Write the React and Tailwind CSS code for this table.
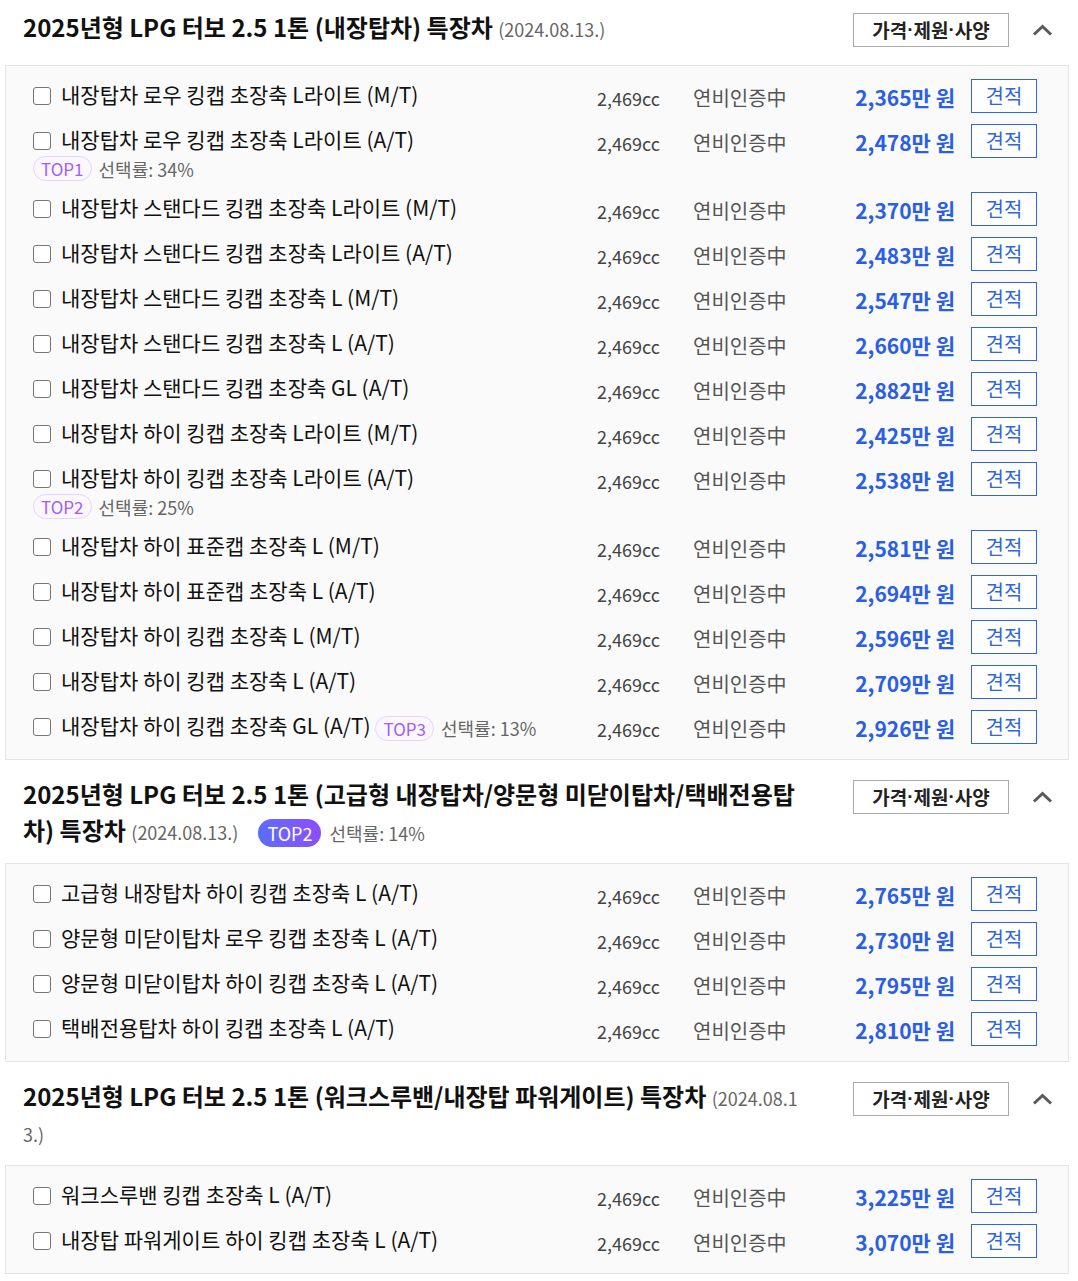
import React from 'react';

const font = { fontFamily: '"Noto Sans CJK KR", "Noto Sans", sans-serif' };

const sections = [
  {
    lines: ['2025년형 LPG 터보 2.5 1톤 (내장탑차) 특장차'],
    date: ['(2024.08.13.)'],
    first: true,
    trims: [
      { name: '내장탑차 로우 킹캡 초장축 L라이트 (M/T)', price: '2,365' },
      { name: '내장탑차 로우 킹캡 초장축 L라이트 (A/T)', price: '2,478', badge: { rank: 'TOP1', rate: '34%' } },
      { name: '내장탑차 스탠다드 킹캡 초장축 L라이트 (M/T)', price: '2,370' },
      { name: '내장탑차 스탠다드 킹캡 초장축 L라이트 (A/T)', price: '2,483' },
      { name: '내장탑차 스탠다드 킹캡 초장축 L (M/T)', price: '2,547' },
      { name: '내장탑차 스탠다드 킹캡 초장축 L (A/T)', price: '2,660' },
      { name: '내장탑차 스탠다드 킹캡 초장축 GL (A/T)', price: '2,882' },
      { name: '내장탑차 하이 킹캡 초장축 L라이트 (M/T)', price: '2,425' },
      { name: '내장탑차 하이 킹캡 초장축 L라이트 (A/T)', price: '2,538', badge: { rank: 'TOP2', rate: '25%' } },
      { name: '내장탑차 하이 표준캡 초장축 L (M/T)', price: '2,581' },
      { name: '내장탑차 하이 표준캡 초장축 L (A/T)', price: '2,694' },
      { name: '내장탑차 하이 킹캡 초장축 L (M/T)', price: '2,596' },
      { name: '내장탑차 하이 킹캡 초장축 L (A/T)', price: '2,709' },
      { name: '내장탑차 하이 킹캡 초장축 GL (A/T)', price: '2,926', badge: { rank: 'TOP3', rate: '13%', inline: true } },
    ],
  },
  {
    lines: ['2025년형 LPG 터보 2.5 1톤 (고급형 내장탑차/양문형 미닫이탑차/택배전용탑', '차) 특장차'],
    date: ['(2024.08.13.)'],
    top: { rank: 'TOP2', rate: '14%' },
    trims: [
      { name: '고급형 내장탑차 하이 킹캡 초장축 L (A/T)', price: '2,765' },
      { name: '양문형 미닫이탑차 로우 킹캡 초장축 L (A/T)', price: '2,730' },
      { name: '양문형 미닫이탑차 하이 킹캡 초장축 L (A/T)', price: '2,795' },
      { name: '택배전용탑차 하이 킹캡 초장축 L (A/T)', price: '2,810' },
    ],
  },
  {
    lines: ['2025년형 LPG 터보 2.5 1톤 (워크스루밴/내장탑 파워게이트) 특장차'],
    date: ['(2024.08.1', '3.)'],
    trims: [
      { name: '워크스루밴 킹캡 초장축 L (A/T)', price: '3,225' },
      { name: '내장탑 파워게이트 하이 킹캡 초장축 L (A/T)', price: '3,070' },
    ],
  },
];

function Chevron() {
  return (
    <svg width="21" height="12" viewBox="0 0 21 12" fill="none">
      <polyline points="2,10.5 10.5,2.5 19,10.5" stroke="#5a5a5a" strokeWidth="3" />
    </svg>
  );
}

function Rank({ badge }) {
  return (
    <span className="inline-flex items-center gap-[7px] whitespace-nowrap align-middle leading-none">
      <span className="inline-flex h-[25px] items-center rounded-full border border-[#e6d4ff] bg-[#fbf7ff] px-[7px] text-[17px] text-[#a45cf6]">
        {badge.rank}
      </span>
      <span className="text-[18px] text-[#666]">선택률: {badge.rate}</span>
    </span>
  );
}

function Checkbox() {
  return (
    <span className="mr-[10px] inline-block h-[18px] w-[18px] rounded-[3px] border-[1.5px] border-[#767676] bg-white align-[-2px]" />
  );
}

function TrimRow({ trim }) {
  const { badge } = trim;
  return (
    <div className="flex items-start">
      <div className="flex-1 pr-[24px] text-[21px] leading-[30px] text-[#111]">
        <div className="whitespace-nowrap">
          <Checkbox />
          {trim.name}
          {badge && badge.inline && (
            <>
              {' '}
              <Rank badge={badge} />
            </>
          )}
        </div>
        {badge && !badge.inline && (
          <div className="flex h-[27px] items-center pt-[2px]">
            <Rank badge={badge} />
          </div>
        )}
      </div>
      <div className="h-[34px] w-[96px] pt-[4px] text-[18px] leading-[30px] text-[#444]">2,469cc</div>
      <div className="h-[34px] w-[120px] pt-[4px] text-[20px] leading-[30px] text-[#555]">연비인증中</div>
      <div className="h-[34px] w-[142px] pt-[2px] text-right text-[21px] font-bold leading-[32px] text-[#2a5ee6]">
        {trim.price}만 원
      </div>
      <button className="ml-[16px] flex h-[34px] w-[66px] items-center justify-center border border-[#2f66e0] bg-white text-[20px] text-[#2f66e0]">
        견적
      </button>
    </div>
  );
}

function Section({ section }) {
  return (
    <section>
      <div className={`flex items-start pl-[23px] pr-[25px] ${section.first ? 'pt-[9px] pb-[18px]' : 'pt-[16px] pb-[15px]'}`}>
        <h2 className="w-[800px] text-[24px] font-bold leading-[36px] text-[#111]">
          {section.lines.map((line, i) => (
            <React.Fragment key={i}>
              {i > 0 && <br />}
              {line}
              {i === section.lines.length - 1 && section.date.length === 1 && (
                <>
                  {' '}
                  <span className="text-[18px] font-normal leading-none text-[#666]">{section.date[0]}</span>
                </>
              )}
            </React.Fragment>
          ))}
          {section.date.length > 1 && (
            <>
              {' '}
              <span className="text-[18px] font-normal leading-none text-[#666]">
                {section.date[0]}
                <br />
                {section.date[1]}
              </span>
            </>
          )}
          {section.top && (
            <span className="ml-[20px] inline-flex items-center gap-[8px] align-middle font-normal leading-none">
              <span className="inline-flex h-[28px] items-center rounded-full bg-gradient-to-r from-[#5a6cff] to-[#8b4dfb] px-[9px] text-[18px] text-white">
                {section.top.rank}
              </span>
              <span className="text-[18px] text-[#666]">선택률: {section.top.rate}</span>
            </span>
          )}
        </h2>
        <button className="ml-auto mt-[4px] flex h-[34px] w-[156px] items-center justify-center border border-[#aaa] bg-white text-[19px] font-bold text-[#222]">
          가격<span className="font-['Liberation_Sans']">·</span>제원<span className="font-['Liberation_Sans']">·</span>사양
        </button>
        <div className="ml-[23px] mt-[4px] flex h-[34px] items-center">
          <Chevron />
        </div>
      </div>
      <div className="ml-[5px] mr-[9px] flex flex-col gap-[11px] border border-[#e4e4e4] bg-[#fafafa] pb-[15px] pl-[27px] pr-[31px] pt-[13px]">
        {section.trims.map((trim) => (
          <TrimRow key={trim.name} trim={trim} />
        ))}
      </div>
    </section>
  );
}

export default function App() {
  return (
    <div className="min-h-screen w-[1078px] bg-white" style={font}>
      {sections.map((section, i) => (
        <Section key={i} section={section} />
      ))}
    </div>
  );
}
